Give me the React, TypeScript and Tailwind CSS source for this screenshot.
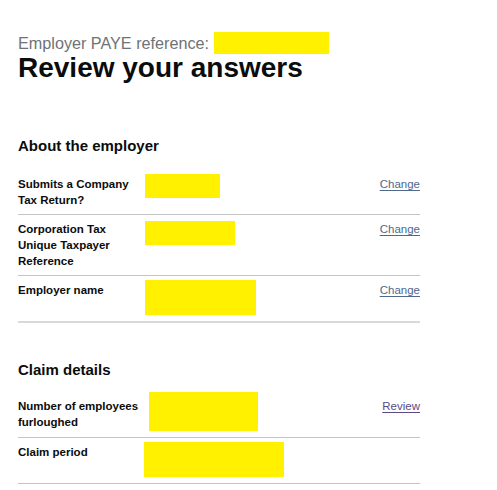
const font = { fontFamily: '"Liberation Sans", Arial, sans-serif' };

type Row = {
  label: string;
  box: string;
  action?: string;
  visited?: boolean;
  border: string;
};

function SummaryRow({ row }: { row: Row }) {
  return (
    <div className={`flex items-start py-[6px] ${row.border}`}>
      <div className="w-[127px] shrink-0 pr-[4px] text-[11.5px] font-bold leading-[16px] text-[#0b0c0c]">
        {row.label}
      </div>
      <div className="flex-1">
        <div className={`bg-[#fff100] ${row.box}`} />
      </div>
      {row.action && (
        <a
          href="#"
          className={`shrink-0 text-[11.5px] leading-[16px] underline underline-offset-2 ${
            row.visited ? 'text-[#5b4a86]' : 'text-[#50698a]'
          }`}
        >
          {row.action}
        </a>
      )}
    </div>
  );
}

const employerRows: Row[] = [
  { label: 'Submits a Company Tax Return?', box: 'w-[75px] h-[24px] mt-[-2px]', action: 'Change', border: 'border-b border-[#c2c4c6]' },
  { label: 'Corporation Tax Unique Taxpayer Reference', box: 'w-[90px] h-[24px]', action: 'Change', border: 'border-b border-[#c2c4c6]' },
  { label: 'Employer name', box: 'w-[111px] h-[35px] mt-[-2px]', action: 'Change', border: 'border-b-2 border-[#d9d9d9]' },
];

const claimRows: Row[] = [
  { label: 'Number of employees furloughed', box: 'w-[109px] h-[39px] mt-[-6px] ml-[4px]', action: 'Review', visited: true, border: 'border-b border-[#c2c4c6]' },
  { label: 'Claim period', box: 'w-[140px] h-[35px] mt-[-2px] ml-[-1px]', border: 'border-b border-[#c2c4c6]' },
];

export default function App() {
  return (
    <div className="min-h-screen bg-white pl-[18px] pt-[32px]" style={font}>
      <div className="w-[402px]">
        <div className="flex items-center h-[22px]">
          <span className="text-[16.2px] leading-[22px] text-[#6f7376]">Employer PAYE reference:</span>
          <span className="ml-[5px] inline-block h-[22px] w-[115px] bg-[#fff100]" />
        </div>
        <h1 className="text-[28px] font-bold leading-[32px] text-[#0b0c0c] mt-[-2px]">Review your answers</h1>

        <h2 className="mt-[52px] text-[15px] font-bold leading-[20px] text-[#0b0c0c]">About the employer</h2>
        <div className="mt-[14px]">
          {employerRows.map((row) => (
            <SummaryRow key={row.label} row={row} />
          ))}
        </div>

        <h2 className="mt-[37px] text-[15px] font-bold leading-[20px] text-[#0b0c0c]">Claim details</h2>
        <div className="mt-[12px]">
          {claimRows.map((row) => (
            <SummaryRow key={row.label} row={row} />
          ))}
        </div>
      </div>
    </div>
  );
}
